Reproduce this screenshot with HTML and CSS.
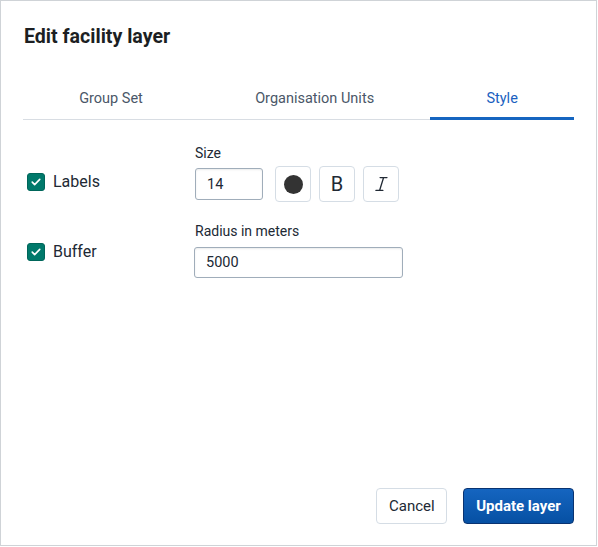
FILE: index.html
```html
<!DOCTYPE html>
<html lang="en">
<head>
<meta charset="utf-8">
<title>Edit facility layer</title>
<link rel="stylesheet" href="styles.css">
</head>
<body>
<div class="dialog">
  <h1 class="title">Edit facility layer</h1>
  <div class="tabs">
    <div class="tab">Group Set</div>
    <div class="tab">Organisation Units</div>
    <div class="tab tab-active">Style</div>
  </div>
  <div class="content">
    <div class="row row-labels">
      <label class="check check-labels">
        <span class="box"><svg viewBox="0 0 16 16" width="12" height="12"><path d="M3 8.2l3.2 3.2L13 4.6" fill="none" stroke="#fff" stroke-width="2.2" stroke-linecap="round" stroke-linejoin="round"/></svg></span>
        <span class="check-text">Labels</span>
      </label>
      <div class="field">
        <div class="field-label">Size</div>
        <div class="controls">
          <input class="input input-size" type="text" value="14">
          <button class="icon-btn" type="button"><span class="dot"></span></button>
          <button class="icon-btn icon-b" type="button">B</button>
          <button class="icon-btn" type="button"><svg viewBox="0 0 24 24" width="22" height="22"><path d="M11 5h7.5M14.8 5l-4.3 14M6.5 19h7.5" fill="none" stroke="#212934" stroke-width="1.5" stroke-linecap="round"/></svg></button>
        </div>
      </div>
    </div>
    <div class="row row-buffer">
      <label class="check check-buffer">
        <span class="box"><svg viewBox="0 0 16 16" width="12" height="12"><path d="M3 8.2l3.2 3.2L13 4.6" fill="none" stroke="#fff" stroke-width="2.2" stroke-linecap="round" stroke-linejoin="round"/></svg></span>
        <span class="check-text">Buffer</span>
      </label>
      <div class="field">
        <div class="field-label">Radius in meters</div>
        <div class="controls">
          <input class="input input-radius" type="text" value="5000">
        </div>
      </div>
    </div>
  </div>
  <div class="footer">
    <button class="btn btn-secondary" type="button">Cancel</button>
    <button class="btn btn-primary" type="button">Update layer</button>
  </div>
</div>
</body>
</html>
```
FILE: styles.css
```css
* { box-sizing: border-box; }
html, body { margin: 0; padding: 0; background: #fff; }
body { font-family: Roboto, "Noto Sans", sans-serif; color: #212934; }

.dialog {
  width: 597px;
  height: 546px;
  border: 1px solid #cfd3d7;
  padding: 23px 22px 21px 22px;
  display: flex;
  flex-direction: column;
}

.title {
  margin: 1px 0 0 1px;
  font-size: 19.6px;
  line-height: 24px;
  font-weight: 700;
  color: #1c1f23;
}

.tabs {
  margin-top: 23px;
  display: flex;
  box-shadow: inset 0 -1px 0 #d8dde3;
}
.tab {
  flex: 1 1 auto;
  height: 48px;
  padding: 8px 10px 0;
  display: flex;
  align-items: center;
  justify-content: center;
  font-size: 14.5px;
  color: #4a5768;
  border-bottom: 3px solid transparent;
}
.tab-active {
  color: #1a5fc0;
  border-bottom-color: #1565c0;
}

.content { flex: 1 1 auto; padding-top: 24px; }

.row { display: flex; align-items: flex-start; }
.row-buffer { margin-top: 20px; }

.check {
  width: 172px;
  display: flex;
  align-items: center;
  gap: 8px;
  padding-left: 4px;
  font-size: 16px;
}
.check-labels { padding-top: 28px; }
.check-buffer { padding-top: 20px; }
.box {
  width: 18px;
  height: 18px;
  border-radius: 3px;
  background: #00796b;
  border: 1px solid #00665a;
  display: flex;
  align-items: center;
  justify-content: center;
}
.check-text { line-height: 20px; }

.field { display: flex; flex-direction: column; }
.field-label { font-size: 14px; line-height: 18px; margin-bottom: 4px; }
.controls { display: flex; align-items: center; gap: 8px; height: 36px; }

.input {
  height: 32px;
  border: 1px solid #a0adba;
  border-radius: 3px;
  padding: 0 11px;
  font-family: Roboto, "Noto Sans", sans-serif;
  font-size: 14.5px;
  color: #212934;
  background: #fff;
  box-shadow: inset 0 1px 2px rgba(48,54,60,0.1);
  outline: none;
}
.input-size { width: 68px; margin-right: 4px; }
.input-radius { width: 209px; height: 31px; margin-left: -1px; }

.icon-btn {
  width: 36px;
  height: 36px;
  border: 1px solid #d5dde5;
  border-radius: 4px;
  background: #fff;
  display: flex;
  align-items: center;
  justify-content: center;
  padding: 0;
  font-family: Roboto, "Noto Sans", sans-serif;
  color: #212934;
}
.dot { width: 19px; height: 19px; border-radius: 50%; background: #333; }
.icon-b { font-size: 20px; font-weight: 400; }

.footer { display: flex; justify-content: flex-end; gap: 16px; }
.btn {
  height: 36px;
  border-radius: 4px;
  font-family: Roboto, "Noto Sans", sans-serif;
  font-size: 15px;
  padding: 0 12px;
}
.btn-secondary {
  width: 71px;
  background: #fff;
  border: 1px solid #d5dde5;
  color: #212934;
}
.btn-primary {
  width: 111px;
  background: linear-gradient(180deg, #1565c0 0%, #0650a3 100%);
  border: 1px solid #093371;
  color: #fff;
  font-weight: 700;
}
```
